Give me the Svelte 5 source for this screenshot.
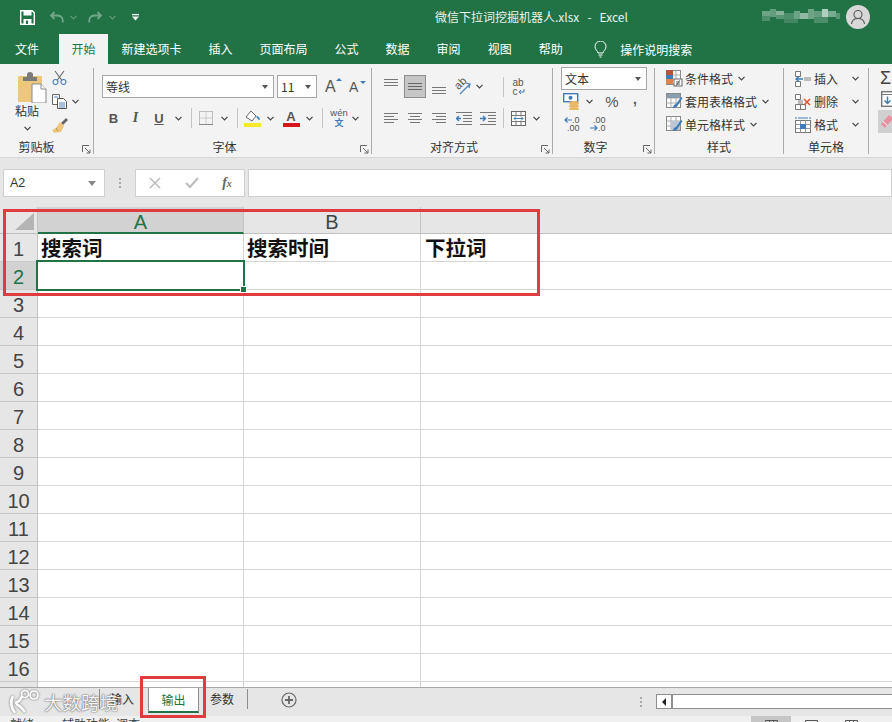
<script>
  const tabs = [['新建选项卡'],['插入'],['页面布局'],['公式'],['数据'],['审阅'],['视图'],['帮助']];
  const rows = Array.from({ length: 17 }, (_, i) => i + 1);
  const blur = [[0,2,8,5,.35],[8,0,6,8,.3],[14,2,8,4,.45],[14,6,8,4,.25],[22,4,10,6,.2],[32,2,6,8,.35],[38,4,8,6,.5],[46,0,6,10,.35],[52,2,8,6,.3],[60,0,6,8,.65],[66,2,8,6,.4],[74,4,4,6,.25],[0,7,8,5,.2],[22,10,14,4,.15],[52,8,14,6,.2]];
</script>

{#snippet chev(c = '#444')}
  <svg class="chev" width="7" height="5" viewBox="0 0 7 5"><path d="M.5 .8 3.5 3.8 6.5 .8" fill="none" stroke={c} stroke-width="1.2"/></svg>
{/snippet}
{#snippet launcher()}
  <svg class="launch" width="9" height="9" viewBox="0 0 9 9"><path d="M.5 7V.5H7M3 3l5 5M8 4.5V8H4.5" fill="none" stroke="#666"/></svg>
{/snippet}
{#snippet sep()}<i class="vsep"></i>{/snippet}
{#snippet sheetIcon(kind)}
  <svg width="17" height="17" viewBox="0 0 17 17">
    <rect x=".5" y=".5" width="14" height="14" fill="#fff" stroke="#888"/>
    <path d="M5 .5v14M10 .5v14M.5 5h14M.5 10h14" stroke="#aaa"/>
    {#if kind === 'cond'}
      <rect x="0" y="0" width="7" height="5" fill="#b5533c"/><rect x="0" y="5" width="7" height="4" fill="#3f7cb8"/><rect x="0" y="9" width="7" height="5" fill="#e0834a"/>
      <rect x="8" y="9" width="8" height="7" fill="#fff" stroke="#666"/><path d="M10 12h4M10 14h4M13.5 10.5l-3 5" stroke="#444" stroke-width=".8"/>
    {:else}
      {#if kind === 'table'}<rect x="1" y="1" width="13" height="4" fill="#8a9db0"/>{:else}<rect x="5" y="5" width="9" height="9" fill="#b9c7d6"/>{/if}
      <path d="M7 15c0-3 2-4 3-4l5-7 1.500 1-4.500 7c-.5 2-3 3-5 3z" fill="#3f7cb8"/>
    {/if}
  </svg>
{/snippet}

<div class="app">
  <header class="title">
    <div class="qat">
      <svg class="save" width="15" height="15" viewBox="0 0 15 15"><path d="M.7.7h11.500l2.100 2.100v11.500H.7z" fill="none" stroke="#fff" stroke-width="1.400"/><rect x="3.500" y="1" width="8" height="4.500" fill="#fff"/><rect x="3.500" y="9" width="8" height="5.500" fill="#fff"/><rect x="6" y="10.500" width="2" height="3.500" fill="#217346"/></svg>
      <svg class="undo" width="15" height="13" viewBox="0 0 15 13"><path d="M13.500 11.500c1-4-1-7-5-7H2M5.500 1 2 4.500 5.500 8" fill="none" stroke="#6fa889" stroke-width="1.800"/></svg>
      {@render chev('#5f9c7c')}
      <svg class="redo" width="15" height="13" viewBox="0 0 15 13"><path d="M1.500 11.500c-1-4 1-7 5-7H13M9.500 1 13 4.500 9.500 8" fill="none" stroke="#6fa889" stroke-width="1.800"/></svg>
      {@render chev('#5f9c7c')}
      <svg class="cust" width="7" height="7" viewBox="0 0 7 7"><path d="M0 0h7v1.200H0zM0 2.500h7L3.500 6.500z" fill="#fff"/></svg>
    </div>
    <div class="doc">微信下拉词挖掘机器人.xlsx&nbsp;&nbsp; - &nbsp;&nbsp;Excel</div>
    <svg class="user" width="78" height="16" viewBox="0 0 78 16">
      {#each blur as b}<rect x={b[0]} y={b[1]} width={b[2]} height={b[3]} fill="#fff" opacity={b[4]}/>{/each}
    </svg>
    <svg class="avatar" width="24" height="24" viewBox="0 0 24 24"><circle cx="12" cy="12" r="12" fill="#d8d8d8"/><circle cx="12" cy="9.500" r="4" fill="none" stroke="#555" stroke-width="1.100"/><path d="M5.500 19c.5-4 3-5.500 6.500-5.500s6 1.500 6.500 5.500" fill="none" stroke="#555" stroke-width="1.100"/></svg>
  </header>

  <nav class="tabs">
    <span class="tab file">文件</span>
    <span class="tab active">开始</span>
    {#each tabs as t}<span class="tab">{t[0]}</span>{/each}
    <svg class="bulb" width="13" height="17" viewBox="0 0 13 17"><path d="M4 12c0-2-3-3-3-6.500a5.500 5.500 0 0 1 11 0C12 9 9 10 9 12zM4.500 14h4M5.500 16h2" fill="none" stroke="#fff"/></svg>
    <span class="search">操作说明搜索</span>
  </nav>

  <section class="ribbon">
    <div class="group clip">
      <div class="clip-body">
        <div class="paste">
          <svg width="30" height="31" viewBox="0 0 30 31">
            <rect x="1" y="4" width="24" height="26" rx="1" fill="#eec77f"/>
            <path d="M6 9V5h4V2.500C10 1 11 0 13 0s3 1 3 2.500V5h4v4z" fill="#7b7b7b"/>
            <path d="M15 12h9l5 5v14H15z" fill="#fff" stroke="#8a8a8a"/>
            <path d="M24 12v5h5" fill="#fff" stroke="#8a8a8a"/>
          </svg>
          <span>粘贴</span>
          {@render chev()}
        </div>
        <div class="clip-tools">
          <svg width="15" height="15" viewBox="0 0 15 15"><g fill="none" stroke-width="1.100"><path d="M3 1l7 9.500M12 1 5 10.500" stroke="#666"/><circle cx="3.500" cy="12" r="2.500" stroke="#4f81bd"/><circle cx="11.500" cy="12" r="2.500" stroke="#4f81bd"/></g></svg>
          <div class="copy">
            <svg width="15" height="15" viewBox="0 0 15 15"><path d="M.5.500h7v10h-7z" fill="#fff" stroke="#666"/><path d="M5.500 4.500h6l3 3v7h-9z" fill="#fff" stroke="#555"/><path d="M7 9h6M7 11h6M7 13h6M2 3h4" stroke="#4f81bd"/></svg>
            {@render chev()}
          </div>
          <svg width="16" height="15" viewBox="0 0 16 15"><path d="M9 5 14 0l2 2-5 5z" fill="#666"/><path d="M8 4l4 4-3 6-7 1-2-3 4-2z" fill="#eec77f"/><path d="M4 10l2 3" stroke="#b8944c"/></svg>
        </div>
      </div>
      <div class="label">剪贴板</div>
      {@render launcher()}
    </div>

    <div class="group font">
      <div class="row font-r1">
        <div class="select fname"><span>等线</span><i class="tri"></i></div>
        <div class="select fsize"><span>11</span><i class="tri"></i></div>
        <span class="grow big">A<i class="up"></i></span>
        <span class="grow small">A<i class="down"></i></span>
      </div>
      <div class="row font-r2">
        <b class="fmt">B</b>
        <i class="fmt ital">I</i>
        <span class="fmt under">U</span>
        {@render chev()}
        {@render sep()}
        <svg width="14" height="14" viewBox="0 0 14 14"><rect x=".5" y=".5" width="13" height="13" fill="none" stroke="#888" stroke-dasharray="1 1"/><path d="M7 .5v13M.5 7h13" stroke="#aaa" stroke-dasharray="1 1"/><path d="M0 13.500h14" stroke="#888"/></svg>
        {@render chev()}
        {@render sep()}
        <svg width="17" height="18" viewBox="0 0 17 18"><path d="M2 8 7 2l5 5-4 5z" fill="#fff" stroke="#666"/><path d="M12 7c2 0 4 2 4 4-2 0-3-2-4-4z" fill="#3f7cb8"/><rect x="0" y="14" width="17" height="4" fill="#f5ea2a"/></svg>
        {@render chev()}
        <span class="colorA">A<i></i></span>
        {@render chev()}
        {@render sep()}
        <span class="wen"><em>wén</em><u>文</u></span>
        {@render chev()}
      </div>
      <div class="label shifted">字体</div>
      {@render launcher()}
    </div>

    <div class="group align">
      <div class="row al-r1">
        <svg class="a-top" width="14" height="9" viewBox="0 0 14 9"><path d="M0 1.500h14M0 4.500h14M0 7.500h14" stroke="#777"/></svg>
        <span class="al-sel"><svg width="14" height="9" viewBox="0 0 14 9"><path d="M0 1.500h14M0 4.500h14M0 7.500h14" stroke="#666"/></svg></span>
        <svg class="a-bot" width="14" height="9" viewBox="0 0 14 9"><path d="M0 1.500h14M0 4.500h14M0 7.500h14" stroke="#777"/></svg>
        <span class="orient"><em>ab</em><svg width="17" height="17" viewBox="0 0 17 17"><path d="M6 16 16 6M12 5l4 1-1 4" fill="none" stroke="#4f81bd" stroke-width="1.200"/></svg></span>
        {@render chev()}
        <span></span>
        {@render sep()}
        <span class="wrap"><em>ab<br/>c</em><svg width="7" height="6" viewBox="0 0 7 6"><path d="M6 0v3H1M3 1 1 3l2 2" fill="none" stroke="#3f7cb8"/></svg></span>
      </div>
      <div class="row al-r2">
        <svg width="14" height="12" viewBox="0 0 14 12"><path d="M0 1.500h14M0 4.500h10M0 7.500h14M0 10.500h10" stroke="#777"/></svg>
        <svg width="14" height="12" viewBox="0 0 14 12"><path d="M0 1.500h14M2 4.500h10M0 7.500h14M2 10.500h10" stroke="#777"/></svg>
        <svg width="14" height="12" viewBox="0 0 14 12"><path d="M0 1.500h14M4 4.500h10M0 7.500h14M4 10.500h10" stroke="#777"/></svg>
        <svg width="16" height="13" viewBox="0 0 16 13"><path d="M0 .5h16M7 3.500h9M7 6.500h9M7 9.500h9M0 12.500h16" stroke="#777"/><path d="M5 6.500H1M3 4 .5 6.500 3 9" fill="none" stroke="#3f7cb8" stroke-width="1.400"/></svg>
        <svg width="16" height="13" viewBox="0 0 16 13"><path d="M0 .5h16M8 3.500h8M8 6.500h8M8 9.500h8M0 12.500h16" stroke="#777"/><path d="M0 6.500h5M3 4l2.500 2.500L3 9" fill="none" stroke="#3f7cb8" stroke-width="1.400"/></svg>
        {@render sep()}
        <svg width="15" height="15" viewBox="0 0 15 15"><rect x=".5" y=".5" width="14" height="14" fill="#fff" stroke="#666"/><path d="M.5 4.500h14M.5 10.500h14M5 .5v4M10 .5v4M5 10.500v4M10 10.500v4" stroke="#777"/><path d="M3 7.500h9M5 5.500l-2 2 2 2M10 5.500l2 2-2 2" fill="none" stroke="#3f7cb8"/></svg>
        {@render chev()}
      </div>
      <div class="label shifted">对齐方式</div>
      {@render launcher()}
    </div>

    <div class="group number">
      <div class="select numfmt"><span>文本</span><i class="tri"></i></div>
      <div class="row num-r2">
        <svg width="17" height="17" viewBox="0 0 17 17"><rect x=".7" y=".7" width="14" height="8" fill="#fff" stroke="#3f7cb8" stroke-width="1.400"/><circle cx="7.500" cy="4.700" r="2" fill="#3f7cb8"/><ellipse cx="11" cy="10" rx="5" ry="2" fill="#e9b96a"/><ellipse cx="11" cy="13" rx="5" ry="2" fill="#e9b96a"/><ellipse cx="11" cy="16" rx="5" ry="1.500" fill="#e9b96a"/></svg>
        {@render chev()}
        <span class="pct">%</span>
        <span class="comma">,</span>
      </div>
      <div class="row num-r3">
        <span class="dec"><span class="dl"><svg width="8" height="6" viewBox="0 0 8 6"><path d="M8 3H1M3.500.5 1 3l2.500 2.500" fill="none" stroke="#3f7cb8" stroke-width="1.200"/></svg>.0</span><span class="dl">.00</span></span>
        <span class="dec"><span class="dl">.00</span><span class="dl"><svg width="8" height="6" viewBox="0 0 8 6"><path d="M0 3h7M4.500.5 7 3 4.500 5.500" fill="none" stroke="#3f7cb8" stroke-width="1.200"/></svg>.0</span></span>
      </div>
      <div class="label shifted">数字</div>
      {@render launcher()}
    </div>

    <div class="group styles">
      <div class="listrow">{@render sheetIcon('cond')}<span>条件格式</span>{@render chev()}</div>
      <div class="listrow">{@render sheetIcon('table')}<span>套用表格格式</span>{@render chev()}</div>
      <div class="listrow">{@render sheetIcon('cell')}<span>单元格样式</span>{@render chev()}</div>
      <div class="label">样式</div>
    </div>

    <div class="group cells">
      <div class="listrow">
        <svg width="16" height="16" viewBox="0 0 16 16"><path d="M.5.500h5v5h-5zM.5 10.500h5v5h-5z" fill="#fff" stroke="#777"/><rect x="9" y="6" width="7" height="4" fill="#bbb"/><path d="M8 8H1M4 5.500 1 8l3 2.500" fill="none" stroke="#3f7cb8" stroke-width="1.300"/></svg>
        <span>插入</span>{@render chev()}
      </div>
      <div class="listrow">
        <svg width="16" height="16" viewBox="0 0 16 16"><path d="M.5.500h5v5h-5zM.5 10.500h5v5h-5zM5.500 10.500h5v5h-5z" fill="#fff" stroke="#777"/><rect x="3" y="6" width="5" height="4" fill="#bbb"/><path d="M9 5l6 6M15 5l-6 6" stroke="#d9542b" stroke-width="1.500"/></svg>
        <span>删除</span>{@render chev()}
      </div>
      <div class="listrow">
        <svg width="16" height="16" viewBox="0 0 16 16"><rect x=".5" y="3.500" width="15" height="12" fill="#fff" stroke="#777"/><path d="M5.500 3.500v12M10.500 3.500v12M.5 7.500h15M.5 11.500h15" stroke="#999"/><rect x="5" y="7" width="6" height="5" fill="#3f7cb8"/><path d="M1 0v2M15 0v2M3 1h10" stroke="#3f7cb8"/></svg>
        <span>格式</span>{@render chev()}
      </div>
      <div class="label">单元格</div>
    </div>

    <div class="group edit">
      <span class="sigma">Σ</span>
      <svg class="fill" width="16" height="16" viewBox="0 0 16 16"><rect x=".7" y=".7" width="20" height="14.600" fill="#fff" stroke="#777" stroke-width="1.400"/><path d="M.7 3.500h20" stroke="#777"/><path d="M6.500 5.500V12M3.500 9.500l3 3 3-3" fill="none" stroke="#3f7cb8" stroke-width="1.500"/></svg>
      <span class="clear"><svg width="12" height="14" viewBox="0 0 12 14"><path d="M0 9 8 0l4 3.500L4 13z" fill="#ea8ea0"/><path d="M2 6.500l4.500 4" stroke="#fff"/></svg></span>
    </div>
  </section>

  <div class="fbar">
    <div class="namebox"><span>A2</span><i class="tri big-tri"></i></div>
    <span class="grip"><i></i><i></i><i></i></span>
    <div class="fbtns">
      <svg width="12" height="12" viewBox="0 0 12 12"><path d="M1 1l10 10M11 1 1 11" stroke="#bcbcbc" stroke-width="1.500"/></svg>
      <svg width="14" height="12" viewBox="0 0 14 12"><path d="M1 6l4 4 8-9" fill="none" stroke="#bcbcbc" stroke-width="2"/></svg>
      <em>f<small>x</small></em>
    </div>
    <div class="finput"></div>
  </div>

  <main class="sheet">
    <div class="hdr">
      <div class="corner"><svg width="20" height="18" viewBox="0 0 20 18"><path d="M19 0v17H0z" fill="#b4b4b4"/></svg></div>
      <div class="col sel">A</div>
      <div class="col b">B</div>
      <div class="col c"></div>
    </div>
    {#each rows as r}
      <div class="gridrow">
        <div class="rownum" class:rsel={r === 2}>{r}</div>
        <div class="cell a">{r === 1 ? '搜索词' : ''}</div>
        <div class="cell b">{r === 1 ? '搜索时间' : ''}</div>
        <div class="cell c">{r === 1 ? '下拉词' : ''}</div>
      </div>
    {/each}
    <div class="selection"><i></i></div>
    <div class="mark mark1"></div>
  </main>

  <div class="sheetbar">
    <span class="sbar-sep first"></span>
    <span class="stab one">输入</span>
    <span class="stab on">输出</span>
    <span class="stab three">参数</span>
    <span class="sbar-sep"></span>
    <svg class="plus" width="16" height="16" viewBox="0 0 16 16"><circle cx="8" cy="8" r="7" fill="none" stroke="#666" stroke-width="1.200"/><path d="M8 4v8M4 8h8" stroke="#666" stroke-width="1.800"/></svg>
    <span class="sgrip"><i></i><i></i><i></i></span>
    <div class="hscroll"><span class="lbtn"><i></i></span></div>
    <div class="mark mark2"></div>
    <div class="water">
      <svg width="36" height="26" viewBox="0 0 36 26"><g fill="none" stroke="#fff" stroke-width="2.600"><path d="M5 7c-3 5-2 12 2 17M7 14c4-1 6-4 7-7M8 15c3 1 6 4 9 8"/><circle cx="17" cy="5" r="3.500" stroke-width="1.700"/><circle cx="26" cy="6" r="4" stroke-width="1.700"/></g></svg>
      <span>大数跨境</span>
    </div>
  </div>

  <footer class="status">
    <span class="st">就绪</span><span class="st2">辅助功能: 调查</span>
    <div class="views">
      <span class="v on"><svg width="13" height="10" viewBox="0 0 13 10"><path d="M.5 9V.5h12V9M4.500.5V9M8.500.5V9" fill="none" stroke="#555"/></svg></span>
      <span class="v"><svg width="13" height="10" viewBox="0 0 13 10"><path d="M.5 9V.5h12V9M3 3h7" fill="none" stroke="#555"/></svg></span>
      <span class="v"><svg width="13" height="10" viewBox="0 0 13 10"><path d="M.5 9V.5h12V9M4.500.5V9M8.500.5V9" fill="none" stroke="#555"/></svg></span>
    </div>
  </footer>
</div>

<style>
  :global(body) { margin: 0; background: #fff; }
  .app {
    width: 892px; height: 722px; overflow: hidden; display: flex; flex-direction: column;
    font-family: "Noto Sans CJK SC", "Liberation Sans", sans-serif; font-size: 12px; color: #333;
  }
  i, em { font-style: normal; }

  .title { height: 34px; flex: none; background: #217346; display: flex; align-items: center; position: relative; color: #fff; }
  .qat { display: flex; align-items: center; padding-left: 20px; }
  .undo { margin-left: 14px; }
  .qat .chev { margin-left: 6px; }
  .redo { margin-left: 11px; }
  .cust { margin-left: 16px; }
  .doc { position: absolute; left: 435px; top: 8px; line-height: 18px; color: #eaf2ed; white-space: nowrap; font-size: 12px; }
  .user { margin-left: auto; }
  .avatar { margin: 0 22px 0 6px; }

  .tabs { height: 30px; flex: none; background: #217346; display: flex; align-items: center; color: #fff; padding-left: 1.5px; }
  .tab { padding: 0 13.5px; line-height: 30px; white-space: nowrap; }
  .tab.file { margin-right: 6.500px; }
  .tab.active { background: #f3f3f3; color: #217346; padding: 0 12.500px; }
  .bulb { margin-left: 18px; }
  .search { margin-left: 13px; }

  .ribbon { height: 94px; flex: none; background: #f3f3f3; border-bottom: 1px solid #d6d6d6; box-sizing: border-box; display: flex; align-items: flex-start; }
  .group { position: relative; margin-top: 4px; height: 86px; box-sizing: border-box; border-right: 1px solid #ababab; flex: none; }
  .label { position: absolute; left: 0; right: 0; bottom: -1px; line-height: 16px; text-align: center; color: #333; white-space: nowrap; }
  .label.shifted { right: 16px; }
  .launch { position: absolute; right: 2px; bottom: 0; }
  .row { display: grid; align-items: center; justify-items: center; }
  .vsep { width: 1px; height: 20px; background: #c6c6c6; display: block; }

  .clip { width: 94px; }
  .clip-body { display: flex; }
  .paste { width: 48px; display: flex; flex-direction: column; align-items: center; padding-top: 4px; box-sizing: border-box; margin-left: 5px; }
  .paste svg:first-child { margin-left: 6px; }
  .paste span { line-height: 16px; margin-top: 0; margin-left: -4px; }
  .paste .chev { margin-top: 7px; margin-left: -4px; }
  .clip-tools { display: flex; flex-direction: column; gap: 9px; padding-top: 2px; margin-left: -1px; }
  .copy { display: flex; align-items: center; gap: 5px; }
  .clip .label { right: 20px; }

  .font { width: 278px; padding-top: 7px; }
  .font-r1 { margin-left: 8px; display: flex; align-items: center; height: 23px; }
  .select { background: #fff; border: 1px solid #a6a6a6; box-sizing: border-box; height: 23px; display: flex; align-items: center; padding: 0 3px; justify-content: space-between; }
  .tri { width: 0; height: 0; border: 3.5px solid transparent; border-top: 4px solid #555; border-bottom: 0; margin-right: 2px; }
  .fname { width: 172px; }
  .fsize { width: 40px; margin-left: 3px; }
  .grow { position: relative; font-family: "Liberation Sans", sans-serif; color: #555; }
  .big { font-size: 16px; margin-left: 8px; width: 24px; }
  .small { font-size: 14px; width: 16px; }
  .up, .down { position: absolute; left: 11px; top: 0; width: 0; height: 0; border: 3px solid transparent; }
  .up { border-bottom: 3px solid #3f7cb8; border-top: 0; }
  .down { border-top: 3px solid #3f7cb8; border-bottom: 0; top: 2px; }
  .font-r2 { margin: 10px 0 0 10px; height: 18px; grid-template-columns: 19px 25px 22px 16px 10px 20px 16px 10px 20px 16px 26px 10px 16px 18px 14px; }
  .fmt { font-family: "Liberation Sans", sans-serif; font-size: 13px; color: #555; font-weight: 700; }
  .ital { font-style: italic; font-family: "Liberation Serif", serif; font-size: 14px; }
  .under { text-decoration: underline; }
  .colorA { display: flex; flex-direction: column; align-items: center; font-family: "Liberation Sans", sans-serif; font-size: 13px; line-height: 13px; color: #555; font-weight: 700; }
  .colorA i { width: 17px; height: 4px; background: #d8141c; }
  .wen { display: flex; flex-direction: column; align-items: center; line-height: 10px; }
  .wen em { font-family: "Liberation Sans", sans-serif; font-size: 9.5px; color: #555; }
  .wen u { text-decoration: none; font-size: 9px; color: #3f7cb8; font-weight: 700; }

  .align { width: 181px; padding-top: 7px; }
  .al-r1 { margin-left: 6px; height: 23px; grid-template-columns: 26px 22px 26px 21px 12px 15px 6px 24px; }
  .a-top { align-self: start; margin-top: 3px; }
  .a-bot { align-self: end; margin-bottom: 3px; }
  .al-sel { width: 22px; height: 23px; box-sizing: border-box; background: #c6c6c6; border: 1px solid #8e8e8e; display: flex; align-items: center; justify-content: center; }
  .orient { position: relative; width: 17px; height: 17px; }
  .orient em { position: absolute; left: 0; top: -1px; font-family: "Liberation Sans", sans-serif; font-size: 11px; transform: rotate(-45deg); color: #555; line-height: 12px; }
  .orient svg { position: absolute; left: 0; top: 0; }
  .wrap { position: relative; }
  .wrap em { display: block; font-family: "Liberation Sans", sans-serif; font-size: 10px; line-height: 9px; color: #555; }
  .wrap svg { position: absolute; left: 6px; top: 11px; }
  .al-r2 { margin: 10px 0 0 6px; height: 18px; grid-template-columns: 26px 22px 26px 24px 24px 6px 24px 12px; }

  .number { width: 102px; }
  .numfmt { width: 86px; margin: -1px 0 0 8px; }
  .num-r2 { margin: 3px 0 0 9px; height: 17px; grid-template-columns: 18px 18px 26px 22px; }
  .pct { font-family: "Liberation Sans", sans-serif; font-size: 15px; color: #555; margin-left: 2px; }
  .comma { font-family: "Liberation Sans", sans-serif; font-size: 14px; font-weight: 700; color: #555; margin-top: -6px; }
  .num-r3 { margin: 6px 0 0 11px; height: 16px; grid-template-columns: 26px 16px; justify-items: start; }
  .dec { display: flex; flex-direction: column; align-items: flex-end; font-family: "Liberation Sans", sans-serif; font-size: 9px; line-height: 8px; color: #555; }
  .dl { display: flex; align-items: center; gap: 0; }

  .styles { width: 129px; padding-left: 11px; }
  .listrow { display: flex; align-items: center; height: 23px; gap: 2px; margin-top: -1px; }
  .listrow:not(:first-child) { margin-top: 0; }
  .styles .chev { margin-left: 3px; }
  .cells { width: 85px; padding-left: 11px; }
  .cells .listrow { gap: 3px; }
  .cells .chev { margin-left: 11px; }

  .edit { border: 0; width: 24px; padding-left: 11px; display: flex; flex-direction: column; }
  .sigma { font-family: "Liberation Sans", sans-serif; font-size: 18px; line-height: 18px; color: #444; height: 19px; margin-top: 1px; }
  .fill { margin-left: 1px; margin-top: 3px; overflow: hidden; }
  .clear { display: flex; align-items: center; background: #d0d0d0; width: 24px; height: 23px; margin-top: 3px; margin-left: -2px; padding-left: 3px; }

  .fbar { height: 49px; flex: none; background: #e6e6e6; display: flex; align-items: flex-start; padding-top: 11px; box-sizing: border-box; }
  .namebox { width: 102px; height: 28px; margin-left: 3px; background: #fff; border: 1px solid #cfcfcf; box-sizing: border-box; display: flex; align-items: center; justify-content: space-between; padding: 0 6px; font-family: "Liberation Sans", sans-serif; font-size: 12.5px; }
  .big-tri { border-width: 4px; border-top-width: 5px; border-bottom-width: 0; border-top-color: #888; }
  .grip, .sgrip { display: flex; flex-direction: column; gap: 2px; }
  .grip { margin: 9px 14px 0 14px; }
  .grip i, .sgrip i { width: 2px; height: 2px; background: #aaa; display: block; }
  .fbtns { width: 110px; height: 28px; background: #fff; border: 1px solid #cfcfcf; box-sizing: border-box; display: grid; grid-template-columns: 37px 37px 34px; align-items: center; justify-items: center; }
  .fbtns em { font-family: "Liberation Serif", serif; font-style: italic; font-weight: 700; color: #666; font-size: 14px; }
  .fbtns small { font-size: 10px; }
  .finput { flex: 1; height: 28px; margin-left: 3px; background: #fff; border: 1px solid #cfcfcf; box-sizing: border-box; }

  .sheet { height: 480px; flex: none; position: relative; overflow: hidden; background: #fff; }
  .hdr { display: flex; height: 27px; background: #e6e6e6; border-bottom: 1px solid #c0c0c0; box-sizing: border-box; }
  .corner { width: 38px; flex: none; box-sizing: border-box; padding: 6px 0 0 15px; border-right: 1px solid #c4c4c4; }
  .col { text-align: center; font-family: "Liberation Sans", sans-serif; font-size: 20px; line-height: 30px; color: #444; box-sizing: border-box; border-right: 1px solid #c4c4c4; height: 26px; flex: none; }
  .col.sel { width: 206px; background: #d2d2d2; color: #217346; border-bottom: 2px solid #217346; height: 27px; }
  .col.b { width: 177px; }
  .col.c { flex: 1; border: 0; }
  .gridrow { display: flex; height: 28px; box-sizing: border-box; }
  .rownum { width: 38px; flex: none; background: #e6e6e6; text-align: center; font-family: "Liberation Sans", sans-serif; font-size: 20px; line-height: 31px; color: #444; box-sizing: border-box; border-right: 1px solid #c4c4c4; border-bottom: 1px solid #c8c8c8; }
  .rsel { background: #d2d2d2; color: #217346; }
  .cell { box-sizing: border-box; border-bottom: 1px solid #d6d6d6; border-right: 1px solid #d6d6d6; font-size: 20.5px; font-weight: 700; color: #111; padding-left: 3px; line-height: 27px; white-space: nowrap; flex: none; }
  .cell.a { width: 206px; }
  .cell.b { width: 177px; }
  .cell.c { flex: 1; border-right: 0; padding-left: 4px; }
  .selection { position: absolute; left: 36px; top: 53px; width: 209px; height: 31px; box-sizing: border-box; border: 2px solid #217346; }
  .selection i { position: absolute; right: -4px; bottom: -4px; width: 5px; height: 5px; background: #217346; border: 1px solid #fff; }
  .mark { position: absolute; border: 3px solid #e03c3f; box-sizing: border-box; pointer-events: none; }
  .mark1 { left: 3px; top: 2px; width: 537px; height: 87px; }

  .sheetbar { height: 29px; flex: none; background: #e6e6e6; border-top: 1px solid #a8a8a8; box-sizing: border-box; display: flex; align-items: center; position: relative; }
  .sbar-sep { width: 1px; height: 20px; background: #8e8e8e; margin-top: -6px; }
  .sbar-sep.first { margin-left: 99px; }
  .stab { line-height: 26px; color: #333; height: 26px; box-sizing: border-box; margin-top: -6px; white-space: nowrap; }
  .stab.one { padding: 0 10px; }
  .stab.three { padding: 0 11px; margin-right: 2px; }
  .stab.on { background: #fff; color: #217346; width: 51px; margin: 0 0 0 4px; align-self: flex-start; height: 25px; line-height: 24px; text-align: center; border-bottom: 2px solid #217346; border-left: 1px solid #8e8e8e; border-right: 1px solid #8e8e8e; }
  .plus { margin-left: 33px; margin-top: -4px; }
  .sgrip { margin-left: 343px; margin-top: -1px; }
  .hscroll { flex: 1; height: 15px; margin-left: 14px; margin-top: -1px; background: #fff; border: 1px solid #8e8e8e; border-right: 0; box-sizing: border-box; display: flex; }
  .lbtn { width: 14px; border-right: 2px solid #8e8e8e; display: flex; align-items: center; justify-content: center; }
  .lbtn i { width: 0; height: 0; border: 4px solid transparent; border-right: 4px solid #222; border-left: 0; }
  .mark2 { left: 140px; top: -12px; width: 66px; height: 42px; z-index: 2; }
  .water { position: absolute; left: 8px; top: 1px; display: flex; align-items: center; gap: 0; color: rgba(255, 255, 255, .95); font-size: 18.5px; line-height: 26px; text-shadow: 0 0 2px rgba(90, 90, 90, .9), 0 0 1px rgba(90, 90, 90, .9); white-space: nowrap; }
  .water svg { filter: drop-shadow(0 0 1px rgba(90, 90, 90, .9)); }

  .status { height: 6px; flex: 1; background: #f0f0f0; position: relative; display: flex; overflow: hidden; font-size: 12px; line-height: 16px; color: #444; }
  .st { margin-left: 10px; }
  .st2 { margin-left: 28px; }
  .views { position: absolute; left: 751px; top: 0; display: flex; }
  .v { width: 40px; height: 7px; display: flex; justify-content: center; padding-top: 4px; box-sizing: border-box; }
  .v.on { background: #c6c6c6; }
</style>
